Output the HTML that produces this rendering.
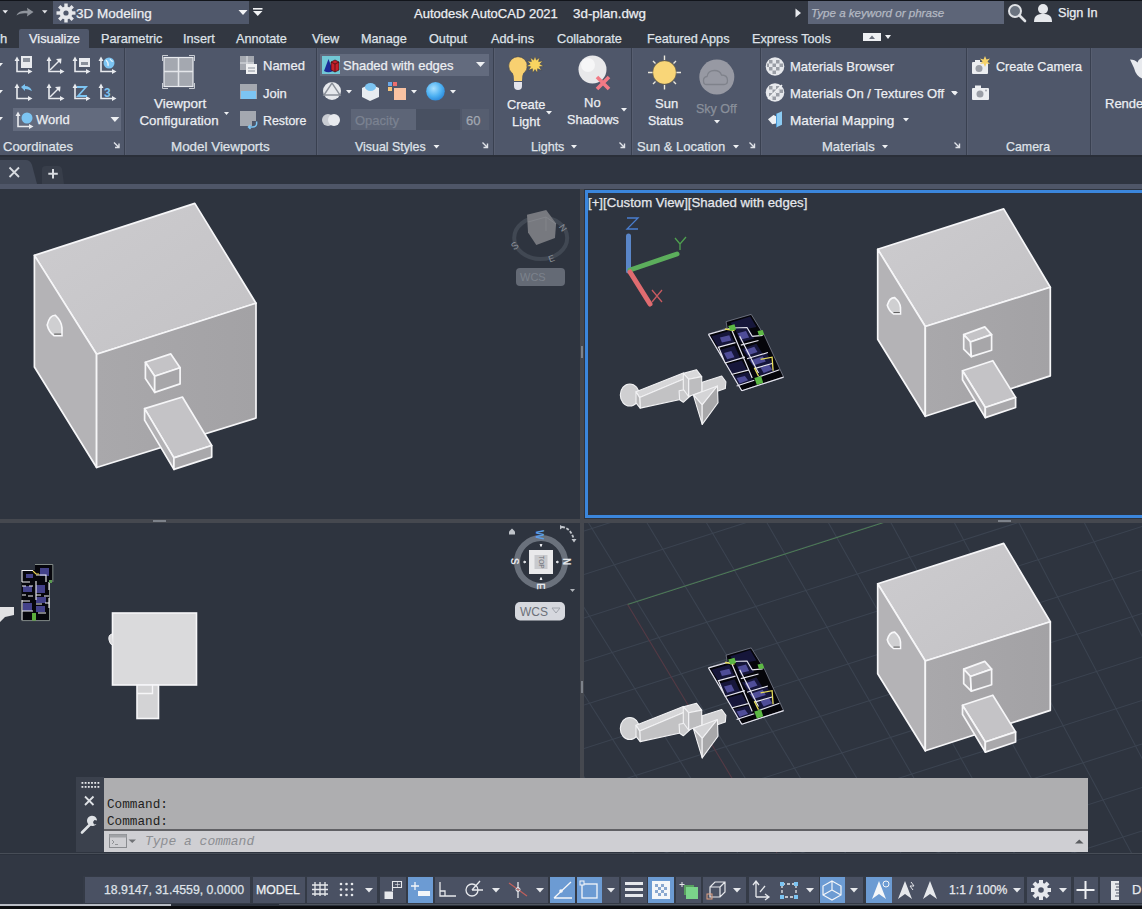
<!DOCTYPE html>
<html><head><meta charset="utf-8">
<style>
*{margin:0;padding:0;box-sizing:border-box}
html,body{width:1142px;height:909px;overflow:hidden;background:#2b313c;font-family:"Liberation Sans",sans-serif;color:#e3e6ec}
.a{position:absolute}
.t{position:absolute;white-space:nowrap;font-size:13px;line-height:16px;-webkit-text-stroke:0.25px currentColor}
svg{position:absolute;overflow:visible}
.sep{position:absolute;top:48px;width:2px;height:107px;background:linear-gradient(to right,#394050 50%,#575e70 50%)}
.lbl{position:absolute;white-space:nowrap;font-size:13px;line-height:16px;top:139px;-webkit-text-stroke:0.25px currentColor}
.sb{position:absolute;top:877px;height:26px;background:#4a5163}
.blu{position:absolute;top:877px;height:26px;background:#6c9bd3}
</style></head><body>
<!-- TITLE BAR -->
<div class="a" style="left:0;top:0;width:1142px;height:26px;background:#323741"></div>
<div class="a" style="left:0;top:0;width:1142px;height:1px;background:#12151b"></div>
<svg style="left:0;top:0" width="60" height="26">
 <path d="M2.5 10.2 L8 10.2 L5.25 13.5 Z" fill="#eceef2"/>
 <path d="M16.5 15.5 C18 11.5 22 10.5 27.5 10.8 L27 7.8 L33.5 12 L27 16.5 L27.5 13.5 C23 13 19.5 13.5 16.5 15.5 Z" fill="#8f949c"/>
 <path d="M42 10.2 L47.5 10.2 L44.75 13.5 Z" fill="#e0e2e6"/>
</svg>
<div class="a" style="left:53px;top:1px;width:196px;height:23px;background:#50586b"></div>
<svg style="left:55px;top:2px" width="22" height="22" viewBox="0 0 22 22">
 <g fill="#e6e8ec">
  <circle cx="11" cy="11" r="6.5"/>
  <rect x="9.3" y="1.5" width="3.4" height="4"/><rect x="9.3" y="16.5" width="3.4" height="4"/>
  <rect x="1.5" y="9.3" width="4" height="3.4"/><rect x="16.5" y="9.3" width="4" height="3.4"/>
  <rect x="9.3" y="1.5" width="3.4" height="4" transform="rotate(45 11 11)"/><rect x="9.3" y="16.5" width="3.4" height="4" transform="rotate(45 11 11)"/>
  <rect x="1.5" y="9.3" width="4" height="3.4" transform="rotate(45 11 11)"/><rect x="16.5" y="9.3" width="4" height="3.4" transform="rotate(45 11 11)"/>
 </g>
 <circle cx="11" cy="11" r="2.6" fill="#50586b"/>
</svg>
<div class="t" style="left:76px;top:6px;font-size:13.5px;color:#eceef2">3D Modeling</div>
<svg style="left:236px;top:8px" width="30" height="12">
 <path d="M2.5 2 L11.5 2 L7 7 Z" fill="#f2f3f5"/>
 <rect x="17" y="0" width="9.5" height="1.6" fill="#f2f3f5"/>
 <path d="M17 3 L26.5 3 L21.75 8 Z" fill="#f2f3f5"/>
</svg>
<div class="t" style="left:414px;top:6px;color:#eceef2">Autodesk AutoCAD 2021</div>
<div class="t" style="left:573px;top:6px;font-size:13.4px;color:#eceef2">3d-plan.dwg</div>
<svg style="left:794px;top:8px" width="10" height="10"><path d="M1.5 0.5 L7 5 L1.5 9.5 Z" fill="#e8eaee"/></svg>
<div class="a" style="left:808px;top:1px;width:196px;height:23px;background:#5d6578"></div>
<div class="t" style="left:811px;top:4.5px;font-size:11.6px;font-style:italic;color:#b4b9c3">Type a keyword or phrase</div>
<svg style="left:1007px;top:3px" width="20" height="20">
 <circle cx="8" cy="8" r="6" fill="#6b7380" stroke="#e0e2e6" stroke-width="2"/>
 <path d="M12.5 12.5 L18 18" stroke="#e0e2e6" stroke-width="2.6" stroke-linecap="round"/>
</svg>
<svg style="left:1033px;top:3px" width="21" height="20">
 <circle cx="10" cy="6" r="5" fill="#e6e8ec"/>
 <path d="M1 19 C1 12 5 11 10 11 C15 11 19 12 19 19 Z" fill="#e6e8ec"/>
</svg>
<div class="t" style="left:1058px;top:5px;font-size:12.7px;color:#eceef2">Sign In</div>

<!-- TABS ROW -->
<div class="a" style="left:0;top:26px;width:1142px;height:22px;background:#323741"></div>
<div class="a" style="left:19px;top:29px;width:70px;height:19px;background:#4f576a;border-radius:2px 2px 0 0"></div>
<div class="t" style="left:0;top:31px;color:#dfe2e8">h</div>
<div class="t" style="left:29px;top:31px;font-size:12.8px;color:#eceef2">Visualize</div>
<div class="t" style="left:101px;top:31px;font-size:12.7px;color:#dfe2e8">Parametric</div>
<div class="t" style="left:183px;top:31px;font-size:12.7px;color:#dfe2e8">Insert</div>
<div class="t" style="left:236px;top:31px;font-size:12.7px;color:#dfe2e8">Annotate</div>
<div class="t" style="left:312px;top:31px;font-size:12.7px;color:#dfe2e8">View</div>
<div class="t" style="left:361px;top:31px;font-size:12.7px;color:#dfe2e8">Manage</div>
<div class="t" style="left:429px;top:31px;font-size:12.7px;color:#dfe2e8">Output</div>
<div class="t" style="left:491px;top:31px;font-size:12.7px;color:#dfe2e8">Add-ins</div>
<div class="t" style="left:557px;top:31px;font-size:12.7px;color:#dfe2e8">Collaborate</div>
<div class="t" style="left:647px;top:31px;font-size:12.7px;color:#dfe2e8">Featured Apps</div>
<div class="t" style="left:752px;top:31px;font-size:12.7px;color:#dfe2e8">Express Tools</div>
<svg style="left:862px;top:32px" width="30" height="12">
 <rect x="1" y="1" width="18" height="8" fill="#eef0f3"/>
 <path d="M7 7 L10 3.5 L13 7 Z" fill="#6a707c"/>
 <path d="M23 3 L29 3 L26 7 Z" fill="#eef0f3"/>
</svg>
<!-- RIBBON -->
<div class="a" style="left:0;top:48px;width:1142px;height:107px;background:#4f576a"></div>
<div class="sep" style="left:124px"></div>
<div class="sep" style="left:316px"></div>
<div class="sep" style="left:493px"></div>
<div class="sep" style="left:631px"></div>
<div class="sep" style="left:760px"></div>
<div class="sep" style="left:966px"></div>
<div class="sep" style="left:1090px"></div>
<svg style="left:0;top:0" width="1142" height="160">
 <defs>
  <g id="ax">
   <path d="M2 3.5 V15.5 H14" fill="none" stroke="#e8eaee" stroke-width="1.6"/>
   <path d="M-0.5 5 L2 0.5 L4.5 5 Z M13 13 L17.5 15.5 L13 18 Z" fill="#e8eaee"/>
  </g>
  <path id="dd" d="M0 0 L6 0 L3 3.5 Z" fill="#eef0f3"/>
  <g id="arr"><path d="M0.5 0.5 L5.5 5.5 M5.5 1.5 V5.5 H1.5" fill="none" stroke="#dfe2e8" stroke-width="1.4"/></g>
 </defs>
 <!-- left edge dropdowns -->
 <use href="#dd" x="-3" y="63"/><use href="#dd" x="-3" y="90"/><use href="#dd" x="-3" y="117"/>
 <!-- UCS icons row 1 -->
 <use href="#ax" x="15" y="56"/>
 <rect x="21" y="56" width="11" height="12" fill="#e8eaee"/><rect x="23" y="58" width="7" height="4" fill="#8a909b"/>
 <use href="#ax" x="47" y="56"/>
 <path d="M50 70 L60 60" stroke="#e8eaee" stroke-width="1.5"/><path d="M56 59 L61.5 58.5 L61 64 Z" fill="#e8eaee"/>
 <use href="#ax" x="73" y="56"/>
 <rect x="79" y="58" width="11" height="9" fill="#e8eaee"/><rect x="81" y="62" width="7" height="3" fill="#8a909b"/>
 <use href="#ax" x="99" y="56"/>
 <circle cx="109" cy="63" r="5.5" fill="#7cc4f2"/><path d="M106 60 Q109 63 108 66 M110 59 Q112 62 113 61" stroke="#e8f4fb" stroke-width="1.2" fill="none"/>
 <!-- row 2 -->
 <use href="#ax" x="15" y="83"/>
 <path d="M21 87 L25 84 L25 86 Q30 86 32 91 Q28 89 25 89 L25 91 Z" fill="#7cc4f2"/>
 <use href="#ax" x="47" y="83"/>
 <path d="M50 97 L59 88" stroke="#e8eaee" stroke-width="1.5"/><path d="M55 87 L60.5 86.5 L60 92 Z" fill="#e8eaee"/>
 <use href="#ax" x="73" y="83"/>
 <path d="M77 87 H86 L78 96 H87" fill="none" stroke="#7cc4f2" stroke-width="1.8"/>
 <use href="#ax" x="99" y="83"/>
 <text x="104" y="97" font-family="Liberation Sans" font-weight="bold" font-size="12" fill="#7cc4f2">3</text>
 <!-- World dropdown -->
 <rect x="13" y="108" width="108" height="23" fill="#636b7e"/>
 <use href="#ax" x="16" y="111"/>
 <circle cx="27" cy="118" r="5.5" fill="#7cc4f2"/>
 <path d="M110.5 117 L119.3 117 L114.9 122 Z" fill="#eef0f3"/>
 <!-- Model viewports icon -->
 <rect x="164" y="57.5" width="29" height="29" fill="#a4a8b0" stroke="#e8eaee" stroke-width="1.2"/>
 <path d="M178.5 57 V86 M164 71.5 H193" stroke="#e4e6ea" stroke-width="1.5"/>
 <path d="M162.5 61 V55.5 H168 M189 55.5 H194.5 V61 M194.5 83 V88.5 H189 M168 88.5 H162.5 V83" fill="none" stroke="#c8ccd2" stroke-width="1"/>
 <path d="M224 112 L229 112 L226.5 115 Z" fill="#eef0f3"/>
 <!-- Named / Join / Restore icons -->
 <rect x="240" y="56" width="14" height="14" fill="#a4a8b0"/><path d="M240 63 H254 M247 56 V70" stroke="#dfe2e6" stroke-width="1"/>
 <rect x="246" y="64" width="11" height="10" fill="#f0f1f3"/><path d="M248 68 H255 M248 71 H255" stroke="#8a909b" stroke-width="1"/>
 <rect x="240" y="84" width="17" height="15" fill="#a4a8b0"/><rect x="241" y="91" width="15" height="8" fill="#7cc4f2"/>
 <rect x="240" y="111" width="16" height="15" fill="#a4a8b0"/>
 <rect x="252" y="121" width="6" height="7" fill="#4f576a"/><path d="M256.5 121.5 Q257.5 127 252.5 127 H248.5 M250.5 125 L248.5 127 L250.5 129" stroke="#7cc4f2" stroke-width="1.5" fill="none"/>
 <!-- Visual styles -->
 <rect x="320" y="54" width="169" height="22" fill="#636b7e"/>
 <rect x="322" y="56" width="18" height="18" fill="#72c8d6"/>
 <path d="M324 71 L328.5 59 L333 71 Q328.5 73.5 324 71 Z" fill="#1c2a98"/>
 <path d="M331 62 L335 60 L339 62 L339 70 L335 72 L331 70 Z" fill="#c61f2a" stroke="#301010" stroke-width="0.7"/>
 <path d="M335 64 V72 M331 62 L335 64 L339 62" stroke="#301010" stroke-width="0.7" fill="none"/>
 <path d="M476 62 L485 62 L480.5 67 Z" fill="#eef0f3"/>
 <circle cx="332" cy="91" r="9" fill="#e6e8ec"/>
 <path d="M324 95 L332 83 L340 95 Z" fill="none" stroke="#8a8f98" stroke-width="1.4"/>
 <use href="#dd" x="346" y="90"/>
 <path d="M362 88 L370 84 L379 88 L379 97 L370 101 L362 97 Z" fill="#e8ecf0"/>
 <ellipse cx="370.5" cy="87" rx="5.5" ry="4" fill="#7cc4f2"/>
 <rect x="388" y="82" width="4" height="4" fill="#6aa8e8"/><rect x="393" y="82" width="4" height="4" fill="#ee6e6e"/><rect x="388" y="87" width="4" height="4" fill="#f4c27a"/>
 <rect x="394" y="88" width="12" height="12" fill="#f9c2a2"/>
 <use href="#dd" x="411" y="90"/>
 <defs><radialGradient id="bsph" cx="0.4" cy="0.35" r="0.7"><stop offset="0" stop-color="#a8e0ff"/><stop offset="0.6" stop-color="#4cb0f2"/><stop offset="1" stop-color="#2a86d8"/></radialGradient></defs><circle cx="435.5" cy="91.3" r="9.3" fill="url(#bsph)"/>
 <use href="#dd" x="450" y="90"/>
 <circle cx="328" cy="120" r="6" fill="#c9ccd2"/><circle cx="334" cy="120" r="6" fill="#e8eaee"/>
 <rect x="351" y="109" width="109" height="21" fill="#485061"/>
 <rect x="351" y="109" width="65" height="21" fill="#5d6577"/>
 <rect x="462" y="109" width="27" height="21" fill="#565e70"/>
 <!-- Lights -->
 <circle cx="518" cy="66" r="9.3" fill="#f8d070" stroke="#3a3f4c" stroke-width="0.6"/><path d="M512 71 Q514 75 514 81 L522 81 Q522 75 524 71 Z" fill="#f8d070"/>
 <path d="M514 82 H522 V86 Q522 90 518 90 Q514 90 514 86 Z" fill="#e4e4ec"/>
 <polygon points="535.0,56.1 536.4,60.1 539.6,57.5 538.6,61.6 542.8,61.1 539.8,64.0 543.5,65.9 539.4,66.7 541.5,70.3 537.6,68.7 537.4,73.0 535.0,69.5 532.6,73.0 532.4,68.7 528.5,70.3 530.6,66.7 526.5,65.9 530.2,64.0 527.2,61.1 531.4,61.6 530.4,57.5 533.6,60.1" fill="#f9d460" stroke="#3a3f4c" stroke-width="0.5"/>
 <use href="#dd" x="546" y="111"/>
 <circle cx="592.5" cy="69.5" r="14" fill="#e8e8ea"/><circle cx="588" cy="65" r="7" fill="#f6f6f7"/>
 <path d="M597 77 L609 89 M609 77 L597 89" stroke="#f27a86" stroke-width="3.6"/>
 <use href="#dd" x="621" y="108"/>
 <!-- Sun -->
 <circle cx="664.5" cy="72.5" r="11.8" fill="#f9d678" stroke="#5a5440" stroke-width="0.6"/>
 <g stroke="#ece8dc" stroke-width="1.4">
  <path d="M664.5 55.5 V60 M664.5 85 V89.5 M648 72.5 H652.5 M676.5 72.5 H681 M653 61 L655.5 63.5 M673.5 81.5 L676 84 M676 61 L673.5 63.5 M655.5 81.5 L653 84"/>
 </g>
 <circle cx="716.8" cy="77" r="17.5" fill="#9799a3"/>
 <path d="M706 84.5 Q703.5 84.5 703.5 80.5 Q703.5 77 707 76.5 Q708 70.5 714.5 70.5 Q720 70.5 721.5 75 Q727.5 75 727.5 80.5 Q727.5 84.5 724 84.5 Z" fill="none" stroke="#7f828b" stroke-width="1.3"/>
 <use href="#dd" x="714" y="120"/>
 <!-- Materials -->
 <circle cx="775" cy="66.5" r="9.3" fill="#e6e8ec"/>
 <g fill="#9a9ea6"><rect x="769" y="60" width="3.5" height="3.5"/><rect x="776" y="60" width="3.5" height="3.5"/><rect x="772.5" y="63.5" width="3.5" height="3.5"/><rect x="779.5" y="63.5" width="3.5" height="3.5"/><rect x="769" y="67" width="3.5" height="3.5"/><rect x="776" y="67" width="3.5" height="3.5"/><rect x="772.5" y="70.5" width="3.5" height="3.5"/><rect x="767" y="63.5" width="2" height="3.5"/></g>
 <circle cx="775" cy="92.5" r="9.3" fill="#e6e8ec"/>
 <g fill="#9a9ea6"><rect x="769" y="86" width="3.5" height="3.5"/><rect x="776" y="86" width="3.5" height="3.5"/><rect x="772.5" y="89.5" width="3.5" height="3.5"/><rect x="779.5" y="89.5" width="3.5" height="3.5"/><rect x="769" y="93" width="3.5" height="3.5"/><rect x="776" y="93" width="3.5" height="3.5"/><rect x="772.5" y="96.5" width="3.5" height="3.5"/></g>
 <path d="M768 99 L782 85" stroke="#f0f1f3" stroke-width="1.6"/>
 <path d="M768 119.3 L773.5 115 L776 116.3 L776 123.6 L772.3 124.2 Z" fill="#eef0f3"/><path d="M776.5 113.8 L782 111.3 L782 124.8 L776.5 127.3 Z" fill="#8ccbf2"/><path d="M776.5 113.8 V127.3" stroke="#4a9ad8" stroke-width="1"/>
 <use href="#dd" x="951" y="91"/>
 <use href="#dd" x="903" y="118"/>
 <!-- Camera -->
 <rect x="972" y="62" width="16" height="12" rx="1" fill="#eceef1"/><rect x="975" y="60" width="5" height="3" fill="#eceef1"/>
 <circle cx="979" cy="68.5" r="3.5" fill="#9a9ea6"/>
 <path d="M985 56 L986.5 59.5 L990 58.5 L987.5 61.5 L990 64 L986.5 63.5 L985 67 L983.5 63.5 L980 64 L982.5 61.5 L980 58.5 L983.5 59.5 Z" fill="#f6d36a"/>
 <rect x="972" y="88" width="17" height="12" rx="1" fill="#eceef1"/><rect x="975" y="85.5" width="6" height="3" fill="#eceef1"/>
 <circle cx="980" cy="94" r="3.5" fill="#9a9ea6"/><circle cx="986" cy="90.5" r="0.9" fill="#9a9ea6"/>
 <use href="#dd" x="952" y="92"/>
 <!-- Render icon -->
 <path d="M1130 59.5 Q1135 59.5 1137.5 62.5 Q1139 59 1142 57.5 V78.5 Q1136 76 1134 68 Z" fill="#e8eaee"/>
 <!-- label arrows -->
 <use href="#arr" x="113.5" y="142"/>
 <use href="#arr" x="482" y="142"/>
 <use href="#arr" x="619" y="142"/>
 <use href="#arr" x="749" y="142"/>
 <use href="#arr" x="954" y="142"/>
 <use href="#dd" x="433.5" y="145"/>
 <use href="#dd" x="571" y="145"/>
 <use href="#dd" x="733" y="145"/>
 <use href="#dd" x="882" y="145"/>
</svg>
<div class="t" style="left:36px;top:112px;color:#eceef2">World</div>
<div class="t" style="left:343px;top:58px;color:#eceef2">Shaded with edges</div>
<div class="t" style="left:355px;top:113px;color:#7b8291">Opacity</div>
<div class="t" style="left:466px;top:113px;color:#a3a8b2">60</div>
<div class="t" style="left:154px;top:96px;font-size:13.5px;color:#eceef2">Viewport</div>
<div class="t" style="left:139.5px;top:113px;font-size:13.3px;color:#eceef2">Configuration</div>
<div class="t" style="left:263px;top:58px;color:#eceef2">Named</div>
<div class="t" style="left:263px;top:86px;color:#eceef2">Join</div>
<div class="t" style="left:263px;top:113px;font-size:12.4px;color:#eceef2">Restore</div>
<div class="t" style="left:507px;top:97px;font-size:12.8px;color:#eceef2">Create</div>
<div class="t" style="left:512px;top:114px;color:#eceef2">Light</div>
<div class="t" style="left:584px;top:95px;color:#eceef2">No</div>
<div class="t" style="left:567px;top:112px;font-size:12.6px;color:#eceef2">Shadows</div>
<div class="t" style="left:655px;top:96px;color:#eceef2">Sun</div>
<div class="t" style="left:648px;top:113px;font-size:12.4px;color:#eceef2">Status</div>
<div class="t" style="left:696px;top:101px;font-size:12.5px;color:#8a909b">Sky Off</div>
<div class="t" style="left:790px;top:59px;color:#eceef2">Materials Browser</div>
<div class="t" style="left:790px;top:86px;color:#eceef2">Materials On / Textures Off</div>
<div class="t" style="left:790px;top:113px;font-size:13.6px;color:#eceef2">Material Mapping</div>
<div class="t" style="left:996px;top:59px;font-size:12.6px;color:#eceef2">Create Camera</div>
<div class="t" style="left:1105px;top:96px;color:#eceef2">Render</div>
<div class="lbl" style="left:3px;color:#dfe2e8">Coordinates</div>
<div class="lbl" style="left:171px;font-size:13.4px;color:#dfe2e8">Model Viewports</div>
<div class="lbl" style="left:355px;font-size:12.4px;color:#dfe2e8">Visual Styles</div>
<div class="lbl" style="left:531px;font-size:12.5px;color:#dfe2e8">Lights</div>
<div class="lbl" style="left:637px;color:#dfe2e8">Sun &amp; Location</div>
<div class="lbl" style="left:822px;color:#dfe2e8">Materials</div>
<div class="lbl" style="left:1006px;font-size:12.4px;color:#dfe2e8">Camera</div>
<!-- FILE TABS -->
<div class="a" style="left:0;top:155px;width:1142px;height:2px;background:#2a2f39"></div>
<div class="a" style="left:0;top:157px;width:1142px;height:27px;background:#2f3541"></div>
<svg style="left:0;top:155px" width="80" height="34">
 <path d="M0 5 H26 Q30 5 32 10 L37 29 H0 Z" fill="#424958"/>
 <path d="M42 14 Q42 11 46 11 H58 Q61 11 62 14 L64 29 H42 Z" fill="#383e4a"/>
 <path d="M9.5 12.5 L19 22 M19 12.5 L9.5 22" stroke="#d8dbe0" stroke-width="1.8"/>
 <path d="M53 14 V23.5 M48.3 18.7 H57.8" stroke="#d8dbe0" stroke-width="2"/>
</svg>
<div class="a" style="left:0;top:184px;width:1142px;height:5px;background:#4f5668"></div>
<!-- VIEWPORTS -->
<div class="a" style="left:0;top:189px;width:1142px;height:664px;background:#2e343f"></div>
<svg style="left:0;top:0" width="1142" height="909">
 <defs><clipPath id="cbr"><rect x="584" y="523" width="558" height="330"/></clipPath>
  <linearGradient id="gtop" x1="0" y1="0" x2="1" y2="1"><stop offset="0" stop-color="#cdcccf"/><stop offset="1" stop-color="#c3c2c5"/></linearGradient>
  <linearGradient id="gright" x1="0" y1="0" x2="1" y2="0"><stop offset="0" stop-color="#a9a8ab"/><stop offset="1" stop-color="#a3a2a5"/></linearGradient>
 </defs>
 <g clip-path="url(#cbr)" stroke="#3b4350" stroke-width="1.1" fill="none">
  <path d="M584 444.0 L1142 265.4 M584 487.5 L1142 308.9 M584 531.0 L1142 352.4 M584 574.5 L1142 395.9 M584 618.0 L1142 439.4 M584 661.5 L1142 482.9 M584 705.0 L1142 526.4 M584 748.5 L1142 569.9 M584 792.0 L1142 613.4 M584 835.5 L1142 656.9 M584 879.0 L1142 700.4 M584 922.5 L1142 743.9 M584 966.0 L1142 787.4 M584 1009.5 L1142 830.9 M258.0 522 L3485.0 5243.0 M310.5 522 L3485.0 5243.0 M364.0 522 L3485.0 5243.0 M418.5 522 L3485.0 5243.0 M474.0 522 L3485.0 5243.0 M530.5 522 L3485.0 5243.0 M588.0 522 L3485.0 5243.0 M646.5 522 L3485.0 5243.0 M706.0 522 L3485.0 5243.0 M766.5 522 L3485.0 5243.0 M828.0 522 L3485.0 5243.0 M890.5 522 L3485.0 5243.0 M954.0 522 L3485.0 5243.0 M1018.5 522 L3485.0 5243.0 M1084.0 522 L3485.0 5243.0 M1150.5 522 L3485.0 5243.0 M1218.0 522 L3485.0 5243.0 "/>
 </g>
 <g clip-path="url(#cbr)">
  <path d="M627.6 604.5 L890 520.5" stroke="#4e7d56" stroke-width="1"/>
  <path d="M627.6 604.5 L777 853" stroke="#553a45" stroke-width="1.1"/>
 </g>
</svg>
<!-- splitters -->
<div class="a" style="left:580px;top:189px;width:4px;height:589px;background:#45484f"></div>
<div class="a" style="left:0;top:519px;width:1142px;height:4px;background:#45484f"></div>
<div class="a" style="left:153px;top:520px;width:13px;height:2px;background:#7d828a"></div>
<div class="a" style="left:998px;top:520px;width:13px;height:2px;background:#7d828a"></div>
<div class="a" style="left:581px;top:346px;width:2px;height:12px;background:#7d828a"></div>
<div class="a" style="left:581px;top:681px;width:2px;height:12px;background:#7d828a"></div>
<!-- active viewport border -->
<div class="a" style="left:585px;top:190px;width:560px;height:328px;border:3px solid #3b86dc;border-right:none"></div>
<div class="t" style="left:588px;top:195px;font-size:13.2px;color:#e6e8ec">[+][Custom View][Shaded with edges]</div>
<svg style="left:0;top:0" width="1142" height="909">
 <g stroke="#f6f6f8" stroke-width="1.7" stroke-linejoin="round">
  <polygon points="194.8,203.4 34.4,255.4 96.6,354.3 256.0,303.2" fill="url(#gtop)"/>
  <polygon points="34.4,255.4 96.6,354.3 96.6,467.5 34.4,367.0" fill="#b4b3b6"/>
  <polygon points="96.6,354.3 256.0,303.2 256.0,418.0 96.6,467.5" fill="url(#gright)"/>
  <polygon points="145.4,362.3 170.8,353.9 180.1,367.7 154.7,376.2" fill="#c4c3c6"/>
  <polygon points="145.4,362.3 154.7,376.2 154.7,392.4 145.4,378.5" fill="#b0afb2"/>
  <polygon points="154.7,376.2 180.1,367.7 180.1,383.9 154.7,392.4" fill="#a7a6a9"/>
  <polygon points="144.6,408.6 182.4,397.0 211.7,445.5 173.9,457.9" fill="#c4c3c6"/>
  <polygon points="144.6,408.6 173.9,457.9 173.9,469.4 144.6,420.1" fill="#b3b2b5"/>
  <polygon points="173.9,457.9 211.7,445.5 211.7,457.1 173.9,469.4" fill="#a9a8ab"/>
 </g>
 <path d="M47.2 325.0 Q49.5 315.1 55.4 315.3 Q61.7 321.3 62.0 327.9 V335.8 H54.2 Q48.7 331.7 47.2 325.0 Z" fill="#cfcfd1" stroke="#f8f8fa" stroke-width="1.6"/>
 <path d="M54.2 334.1 H61.2" stroke="#555" stroke-width="1"/>
 <g stroke="#f6f6f8" stroke-width="1.7" stroke-linejoin="round">
  <polygon points="1003.7,208.9 877.7,249.3 925.3,326.5 1050.3,287.3" fill="url(#gtop)"/>
  <polygon points="877.7,249.3 925.3,326.5 925.3,416.3 877.7,339.2" fill="#b4b3b6"/>
  <polygon points="925.3,326.5 1050.3,287.3 1050.3,375.9 925.3,416.3" fill="url(#gright)"/>
  <polygon points="963.7,334.6 984.8,326.9 991.6,334.6 970.5,342.0" fill="#c4c3c6"/>
  <polygon points="963.7,334.6 970.5,342.0 971.3,356.6 963.7,349.2" fill="#b0afb2"/>
  <polygon points="970.5,342.0 991.6,334.6 991.6,350.3 971.3,356.6" fill="#a7a6a9"/>
  <polygon points="962.5,370.8 992.8,360.7 1015.6,397.4 985.3,407.5" fill="#c4c3c6"/>
  <polygon points="962.5,370.8 985.3,407.5 985.3,417.6 962.5,379.7" fill="#b3b2b5"/>
  <polygon points="985.3,407.5 1015.6,397.4 1015.6,407.5 985.3,417.6" fill="#a9a8ab"/>
 </g>
 <path d="M887.3 305.3 Q889.4 297.4 894.7 297.6 Q900.2 302.3 900.5 307.6 V313.9 H893.5 Q888.7 310.6 887.3 305.3 Z" fill="#cfcfd1" stroke="#f8f8fa" stroke-width="1.6"/>
 <path d="M893.5 312.6 H899.8" stroke="#555" stroke-width="1"/>
 <g stroke="#f6f6f8" stroke-width="1.7" stroke-linejoin="round">
  <polygon points="1003.7,543.4 877.7,583.8 925.3,661.0 1050.3,621.8" fill="url(#gtop)"/>
  <polygon points="877.7,583.8 925.3,661.0 925.3,750.8 877.7,673.7" fill="#b4b3b6"/>
  <polygon points="925.3,661.0 1050.3,621.8 1050.3,710.4 925.3,750.8" fill="url(#gright)"/>
  <polygon points="963.7,669.1 984.8,661.4 991.6,669.1 970.5,676.5" fill="#c4c3c6"/>
  <polygon points="963.7,669.1 970.5,676.5 971.3,691.1 963.7,683.7" fill="#b0afb2"/>
  <polygon points="970.5,676.5 991.6,669.1 991.6,684.8 971.3,691.1" fill="#a7a6a9"/>
  <polygon points="962.5,705.3 992.8,695.2 1015.6,731.9 985.3,742.0" fill="#c4c3c6"/>
  <polygon points="962.5,705.3 985.3,742.0 985.3,752.1 962.5,714.2" fill="#b3b2b5"/>
  <polygon points="985.3,742.0 1015.6,731.9 1015.6,742.0 985.3,752.1" fill="#a9a8ab"/>
 </g>
 <path d="M887.3 639.8 Q889.4 631.9 894.7 632.1 Q900.2 636.9 900.5 642.1 V648.4 H893.5 Q888.7 645.1 887.3 639.8 Z" fill="#cfcfd1" stroke="#f8f8fa" stroke-width="1.6"/>
 <path d="M893.5 647.1 H899.8" stroke="#555" stroke-width="1"/>
 <g>
  <polygon points="708.4,334.3 727.2,328.0 726.1,321.7 751.2,314.4 764.8,336.3 783.6,377.1 741.8,390.7" fill="#05050a" stroke="#9aa0b0" stroke-width="0.6"/>
  <polygon points="711.5,336.3 729.3,331.1 734.5,342.6 717.8,346.8" fill="#16163a"/>
  <polygon points="735.5,330.1 748.1,326.9 754.3,338.4 740.8,342.6" fill="#16163a"/>
  <polygon points="719.9,349.9 734.5,345.8 740.8,359.3 726.1,362.5" fill="#16163a"/>
  <polygon points="741.8,348.9 756.4,343.7 762.7,354.1 748.1,358.3" fill="#16163a"/>
  <polygon points="748.1,359.3 766.9,353.1 772.1,363.5 754.3,367.7" fill="#16163a"/>
  <polygon points="727.2,364.6 741.8,360.4 747.0,369.8 731.3,374.0" fill="#16163a"/>
  <polygon points="733.4,376.1 748.1,371.9 753.3,381.3 738.7,385.5" fill="#16163a"/>
  <polygon points="756.4,365.6 771.1,361.4 775.2,371.9 759.6,376.1" fill="#16163a"/>
  <polygon points="730.3,322.8 750.2,316.5 756.4,326.9 736.6,331.1" fill="#16163a"/>
  <polygon points="719.9,337.4 729.3,335.3 731.3,340.5 721.9,342.6" fill="#4f4d98"/>
  <polygon points="737.6,333.2 746.0,331.1 749.1,337.4 740.8,339.5" fill="#4f4d98"/>
  <polygon points="724.0,353.1 731.3,351.0 734.5,357.2 727.2,359.3" fill="#4f4d98"/>
  <polygon points="744.9,349.9 754.3,346.8 757.5,352.0 748.1,355.2" fill="#4f4d98"/>
  <polygon points="750.2,360.4 762.7,356.2 765.8,361.4 753.3,365.6" fill="#4f4d98"/>
  <polygon points="736.6,378.1 744.9,376.1 748.1,380.2 739.7,383.4" fill="#4f4d98"/>
  <polygon points="760.6,367.7 769.0,364.6 772.1,369.8 763.7,372.9" fill="#4f4d98"/>
  <path d="M708.4 334.3 L741.8 390.7 M741.8 390.7 L783.6 377.1 M708.4 334.3 L731.3 328.0 L747.0 327.5 L752.2 336.3 M717.8 347.3 L735.5 342.6 M725.1 363.0 L744.9 357.2 M731.3 374.5 L749.1 369.8 M736.6 386.0 L754.3 380.2 M740.8 345.2 L758.5 340.5 M747.0 358.8 L767.9 352.5 M754.3 368.7 L772.1 363.5 M758.5 377.1 L779.4 369.8 M731.3 329.0 L752.2 378.1 M739.7 336.3 L758.5 372.9 M752.2 336.3 L762.7 335.3 M718.8 347.8 L725.1 363.0" stroke="#e4e4ee" stroke-width="1.2" fill="none"/>
  <path d="M760.6 359.3 L772.1 357.2 L773.1 370.8 M754.3 367.7 L758.5 376.1 M725.1 329.0 L734.5 330.6" stroke="#e6dc58" stroke-width="1.3" fill="none"/>
  <polygon points="728.2,325.9 734.5,324.3 736.1,329.6 730.3,331.1" fill="#5cb844"/>
  <polygon points="757.5,331.1 762.7,330.1 764.3,334.8 759.0,335.8" fill="#5cb844"/>
  <polygon points="754.3,378.1 761.1,376.1 763.2,382.8 756.9,384.9" fill="#5cb844"/>
 </g>
 <g>
  <polygon points="708.4,667.8 727.2,661.5 726.1,655.2 751.2,647.9 764.8,669.8 783.6,710.6 741.8,724.2" fill="#05050a" stroke="#9aa0b0" stroke-width="0.6"/>
  <polygon points="711.5,669.8 729.3,664.6 734.5,676.1 717.8,680.3" fill="#16163a"/>
  <polygon points="735.5,663.6 748.1,660.4 754.3,671.9 740.8,676.1" fill="#16163a"/>
  <polygon points="719.9,683.4 734.5,679.3 740.8,692.8 726.1,696.0" fill="#16163a"/>
  <polygon points="741.8,682.4 756.4,677.2 762.7,687.6 748.1,691.8" fill="#16163a"/>
  <polygon points="748.1,692.8 766.9,686.6 772.1,697.0 754.3,701.2" fill="#16163a"/>
  <polygon points="727.2,698.1 741.8,693.9 747.0,703.3 731.3,707.5" fill="#16163a"/>
  <polygon points="733.4,709.6 748.1,705.4 753.3,714.8 738.7,719.0" fill="#16163a"/>
  <polygon points="756.4,699.1 771.1,694.9 775.2,705.4 759.6,709.6" fill="#16163a"/>
  <polygon points="730.3,656.3 750.2,650.0 756.4,660.4 736.6,664.6" fill="#16163a"/>
  <polygon points="719.9,670.9 729.3,668.8 731.3,674.0 721.9,676.1" fill="#4f4d98"/>
  <polygon points="737.6,666.7 746.0,664.6 749.1,670.9 740.8,673.0" fill="#4f4d98"/>
  <polygon points="724.0,686.6 731.3,684.5 734.5,690.7 727.2,692.8" fill="#4f4d98"/>
  <polygon points="744.9,683.4 754.3,680.3 757.5,685.5 748.1,688.7" fill="#4f4d98"/>
  <polygon points="750.2,693.9 762.7,689.7 765.8,694.9 753.3,699.1" fill="#4f4d98"/>
  <polygon points="736.6,711.6 744.9,709.6 748.1,713.7 739.7,716.9" fill="#4f4d98"/>
  <polygon points="760.6,701.2 769.0,698.1 772.1,703.3 763.7,706.4" fill="#4f4d98"/>
  <path d="M708.4 667.8 L741.8 724.2 M741.8 724.2 L783.6 710.6 M708.4 667.8 L731.3 661.5 L747.0 661.0 L752.2 669.8 M717.8 680.8 L735.5 676.1 M725.1 696.5 L744.9 690.7 M731.3 708.0 L749.1 703.3 M736.6 719.5 L754.3 713.7 M740.8 678.7 L758.5 674.0 M747.0 692.3 L767.9 686.0 M754.3 702.2 L772.1 697.0 M758.5 710.6 L779.4 703.3 M731.3 662.5 L752.2 711.6 M739.7 669.8 L758.5 706.4 M752.2 669.8 L762.7 668.8 M718.8 681.3 L725.1 696.5" stroke="#e4e4ee" stroke-width="1.2" fill="none"/>
  <path d="M760.6 692.8 L772.1 690.7 L773.1 704.3 M754.3 701.2 L758.5 709.6 M725.1 662.5 L734.5 664.1" stroke="#e6dc58" stroke-width="1.3" fill="none"/>
  <polygon points="728.2,659.4 734.5,657.8 736.1,663.1 730.3,664.6" fill="#5cb844"/>
  <polygon points="757.5,664.6 762.7,663.6 764.3,668.3 759.0,669.3" fill="#5cb844"/>
  <polygon points="754.3,711.6 761.1,709.6 763.2,716.3 756.9,718.4" fill="#5cb844"/>
 </g>
 <g stroke="#f2f2f4" stroke-width="1.1" stroke-linejoin="round">
  <ellipse cx="629.8" cy="395" rx="9.5" ry="11" fill="#cfcfd1"/>
  <polygon points="636.0,391.8 683.3,372.9 684.3,378.7 639.7,397.6" fill="#d6d6d8"/>
  <polygon points="639.7,397.6 684.3,378.7 683.3,392.8 679.1,399.7 640.2,408.1" fill="#c2c2c4"/>
  <polygon points="636.0,391.8 639.7,397.6 640.2,408.1 636.0,402.8" fill="#b8b8ba"/>
  <polygon points="702.2,382.3 721.7,376.0 725.9,381.8 725.3,388.6 717.4,391.3 702.2,396.5" fill="#d0d0d2"/>
  <polygon points="679.1,390.7 684.3,389.7 690.7,395.5 683.3,402.3 679.6,399.7" fill="#cacacc"/>
  <polygon points="683.3,373.4 696.4,369.7 701.7,376.6 688.6,379.2" fill="#d8d8da"/>
  <polygon points="688.6,379.2 701.7,376.6 701.7,391.8 688.6,396.5" fill="#bdbdbf"/>
  <polygon points="683.3,373.4 688.6,379.2 688.6,396.5 683.3,389.2" fill="#c8c8ca"/>
  <polygon points="693.3,394.9 717.4,386.0 702.2,404.9" fill="#d4d4d6"/>
  <polygon points="693.3,394.9 702.2,404.9 702.2,424.4" fill="#b4b4b6"/>
  <polygon points="702.2,404.9 717.4,386.0 718.0,402.8 702.2,424.4" fill="#a8a8aa"/>
 </g>
 <g stroke="#f2f2f4" stroke-width="1.1" stroke-linejoin="round">
  <ellipse cx="629.8" cy="728.5" rx="9.5" ry="11" fill="#cfcfd1"/>
  <polygon points="636.0,725.3 683.3,706.4 684.3,712.2 639.7,731.1" fill="#d6d6d8"/>
  <polygon points="639.7,731.1 684.3,712.2 683.3,726.3 679.1,733.2 640.2,741.6" fill="#c2c2c4"/>
  <polygon points="636.0,725.3 639.7,731.1 640.2,741.6 636.0,736.3" fill="#b8b8ba"/>
  <polygon points="702.2,715.8 721.7,709.5 725.9,715.3 725.3,722.1 717.4,724.8 702.2,730.0" fill="#d0d0d2"/>
  <polygon points="679.1,724.2 684.3,723.2 690.7,729.0 683.3,735.8 679.6,733.2" fill="#cacacc"/>
  <polygon points="683.3,706.9 696.4,703.2 701.7,710.1 688.6,712.7" fill="#d8d8da"/>
  <polygon points="688.6,712.7 701.7,710.1 701.7,725.3 688.6,730.0" fill="#bdbdbf"/>
  <polygon points="683.3,706.9 688.6,712.7 688.6,730.0 683.3,722.7" fill="#c8c8ca"/>
  <polygon points="693.3,728.4 717.4,719.5 702.2,738.4" fill="#d4d4d6"/>
  <polygon points="693.3,728.4 702.2,738.4 702.2,757.9" fill="#b4b4b6"/>
  <polygon points="702.2,738.4 717.4,719.5 718.0,736.3 702.2,757.9" fill="#a8a8aa"/>
 </g>
 <!-- faded viewcube TL -->
 <ellipse cx="540.7" cy="238" rx="26.5" ry="21" fill="none" stroke="#414853" stroke-width="4"/>
 <polygon points="527,214.8 546.2,209.9 556.1,223.6 555,237.9 536.3,245 528,232.4" fill="#77797f"/>
 <path d="M528 222 L546 217 L556 224 M546 217 V231" stroke="#85888e" stroke-width="0.8" fill="none"/>
 <text x="511" y="249" font-family="Liberation Sans" font-size="10" fill="#8a8f98" transform="rotate(-35 515 245)">S</text>
 <text x="560" y="232" font-family="Liberation Sans" font-size="9" fill="#8a8f98" transform="rotate(55 564 228)">N</text>
 <text x="548" y="261" font-family="Liberation Sans" font-size="9" fill="#8a8f98" transform="rotate(-20 553 257)">E</text>
 <rect x="516" y="268" width="49" height="18" rx="4" fill="#646a75"/>
 <text x="520" y="281" font-family="Liberation Sans" font-size="11" fill="#7c828c">WCS</text>
 <!-- UCS icon -->
 <path d="M628.5 271 V236" stroke="#5a86c8" stroke-width="5" stroke-linecap="round"/>
 <path d="M630 270 L677 254" stroke="#5cae5c" stroke-width="5" stroke-linecap="round"/>
 <path d="M630 272 L650 304" stroke="#e06c70" stroke-width="5" stroke-linecap="round"/>
 <path d="M627 218 H638 L627 229 H638" stroke="#4a7ed0" stroke-width="1.3" fill="none"/>
 <path d="M675 238 L680 244 L686 237 M680 244 V250" stroke="#4fa04f" stroke-width="1.3" fill="none"/>
 <path d="M652 290 L662 302 M662 290 L652 302" stroke="#c85a60" stroke-width="1.3" fill="none"/>
 <!-- ===== BOTTOM-LEFT ===== -->
 <rect x="112.5" y="613" width="84" height="72" fill="#dadadc" stroke="#f6f6f8" stroke-width="1.6"/>
 <rect x="137" y="685" width="21.5" height="33.5" fill="#d3d3d5" stroke="#f6f6f8" stroke-width="1.6"/>
 <path d="M137 693.5 H152.5 V685" stroke="#f6f6f8" stroke-width="1.4" fill="none"/>
 <path d="M112 634 Q108 635 109 640 Q110 645 113 645" fill="#dcdcde" stroke="#f6f6f8" stroke-width="1"/>
 <g>
  <polygon points="21.5,570 35,570 35,564.5 52.8,564.5 52.8,582 49.5,582 49.5,620.6 21.5,620.6" fill="#06060c"/>
  <path d="M35 564.5 H52.8 V582 M49.5 582 V620.6 H21.5" stroke="#9aa4a0" stroke-width="0.8" fill="none"/>
  <g fill="#44428a"><rect x="26" y="574" width="7" height="4"/><rect x="36" y="585" width="9" height="8"/><rect x="23" y="586" width="9" height="6"/><rect x="36" y="597" width="10" height="6"/><rect x="23" y="603" width="9" height="8"/><rect x="36" y="606" width="9" height="6"/><rect x="40" y="568" width="9" height="8"/></g>
  <path d="M22 570.5 H33 M22 570 V582 M22 582 H30 M36 575 H46 V582 M36 581 V600 M22 586 H26 M29 586 H33 M22 595 H26 M28 596 H33 M36 595 H41 M44 596 H49 M22 601 H30 M36 604 H42 M45 603 H49 M22 611 H33 M38 613 H46 M22 620 V600 M49 582 V590 M49 598 V608" stroke="#f0f0f4" stroke-width="1.1" fill="none"/>
  <path d="M33 571 L36 574 H39" stroke="#e8d050" stroke-width="1.2" fill="none"/>
  <rect x="32" y="613" width="4" height="7.5" fill="#5cae3c"/><rect x="49" y="580" width="3" height="3" fill="#5a9a50"/>
 </g>
 <polygon points="0,607 14,607 14,615 5,617 0,622" fill="#e2e2e4"/>
 <!-- viewcube BL -->
 <circle cx="541" cy="562" r="24" fill="none" stroke="#6a717c" stroke-width="6"/>
 <rect x="529" y="550" width="24" height="24" fill="#e9e9eb"/>
 <rect x="534.5" y="555" width="13" height="14" fill="#c8c9cd"/>
 <text x="541" y="564.2" text-anchor="middle" font-family="Liberation Sans" font-size="6.5" fill="#6a6e75" transform="rotate(90 541 562)">TOP</text>
 <text x="536" y="540" font-family="Liberation Sans" font-weight="bold" font-size="10" fill="#5c9ee6" transform="rotate(90 541 535)">W</text>
 <text x="511" y="566" font-family="Liberation Sans" font-weight="bold" font-size="10" fill="#e6e8ec" transform="rotate(90 515 562)">S</text>
 <text x="563" y="566" font-family="Liberation Sans" font-weight="bold" font-size="10" fill="#e6e8ec" transform="rotate(90 567 562)">N</text>
 <text x="537" y="591" font-family="Liberation Sans" font-weight="bold" font-size="10" fill="#e6e8ec" transform="rotate(90 541 587)">E</text>
 <path d="M540 544.5 L541 546.5 L542 544.5 Z M540 579.5 L541 577.5 L542 579.5 Z M524 561 L526 562 L524 563 Z M558 561 L556 562 L558 563 Z" fill="#e6e8ec" stroke="#e6e8ec" stroke-width="1"/>
 <path d="M509 531.5 L512 528.5 L515 531.5 V534.5 H509 Z" fill="#c0c4ca"/>
 <path d="M562 527 Q571 528 574 540" fill="none" stroke="#c0c4ca" stroke-width="1.8" stroke-dasharray="3 1.5"/><path d="M560 525 L563.5 527 L560 529.5 Z M571.5 539 L574 542.5 L576.5 539 Z" fill="#c0c4ca"/>
 <path d="M570 589 L575 589 L572.5 592 Z" fill="#b0b4ba"/>
 <rect x="515" y="602" width="50" height="18.5" rx="5" fill="#d6d8de"/>
 <text x="520" y="616" font-family="Liberation Sans" font-size="12" fill="#6c7079">WCS</text>
 <path d="M552 608 L560 608 L556 613 Z" fill="none" stroke="#a0a4ac" stroke-width="1"/>
</svg>
<!-- COMMAND LINE -->
<div class="a" style="left:76px;top:777px;width:28px;height:75px;background:#3b414d"></div>
<svg style="left:76px;top:777px" width="30" height="75">
 <g fill="#e6e8ec"><rect x="5.5" y="5" width="1.8" height="1.8"/><rect x="8.7" y="5" width="1.8" height="1.8"/><rect x="11.9" y="5" width="1.8" height="1.8"/><rect x="15.1" y="5" width="1.8" height="1.8"/><rect x="18.3" y="5" width="1.8" height="1.8"/><rect x="21.5" y="5" width="1.8" height="1.8"/><rect x="5.5" y="9" width="1.8" height="1.8"/><rect x="8.7" y="9" width="1.8" height="1.8"/><rect x="11.9" y="9" width="1.8" height="1.8"/><rect x="15.1" y="9" width="1.8" height="1.8"/><rect x="18.3" y="9" width="1.8" height="1.8"/><rect x="21.5" y="9" width="1.8" height="1.8"/></g>
 <path d="M9 19.5 L17.5 28 M17.5 19.5 L9 28" stroke="#dfe2e6" stroke-width="1.8"/>
 <path d="M6 55.5 L15 46.5" stroke="#dfe2e6" stroke-width="2.6" stroke-linecap="round"/>
 <path d="M13.5 48 A5 5 0 1 1 21 43.5 L18.5 43 L17 45 L18 47.5 L20.5 47 A5 5 0 0 1 13.5 48 Z" fill="#dfe2e6"/>
</svg>
<div class="a" style="left:104px;top:778px;width:984px;height:51px;background:#aeaeb0"></div>
<div class="a" style="left:104px;top:829px;width:984px;height:2px;background:#606064"></div>
<div class="a" style="left:104px;top:831px;width:984px;height:21px;background:#cfcfd3"></div>
<div class="t" style="left:107px;top:796px;font-family:'Liberation Mono',monospace;font-size:12.7px;line-height:17px;color:#1e1e20;-webkit-text-stroke:0">Command:<br>Command:</div>
<svg style="left:104px;top:831px" width="984" height="21">
 <rect x="5.5" y="3.5" width="17" height="13" fill="none" stroke="#8a8c90" stroke-width="1"/>
 <rect x="5.5" y="3.5" width="17" height="3" fill="#a0a2a6"/>
 <path d="M8 9 L10 11 L8 13 M11 13.5 H14" stroke="#8a8c90" stroke-width="0.9" fill="none"/>
 <path d="M24.5 8.5 L32 8.5 L28.25 12 Z" fill="#707276"/>
 <path d="M971 12.5 L979.5 12.5 L975.25 8.5 Z" fill="#5a5c60"/>
</svg>
<div class="t" style="left:145px;top:833px;font-family:'Liberation Mono',monospace;font-style:italic;font-size:13px;line-height:17px;color:#8c8e92;-webkit-text-stroke:0">Type a command</div>

<!-- STATUS BAR -->
<div class="a" style="left:0;top:853px;width:1142px;height:1px;background:#474d57"></div>
<div class="a" style="left:0;top:855px;width:1142px;height:49px;background:#313743"></div>
<div class="a" style="left:83px;top:876px;width:1059px;height:28px;background:#343a46"></div>
<div class="a" style="left:0;top:904px;width:171px;height:2px;background:#b8bcc4"></div>
<div class="a" style="left:279px;top:904px;width:863px;height:1px;background:#50565f"></div>
<div class="a" style="left:0;top:906px;width:1142px;height:3px;background:#0c0d10"></div>
<div class="sb" style="left:85px;width:165px"></div>
<div class="sb" style="left:253px;width:52px"></div>
<div class="sb" style="left:307px;width:70px"></div>
<div class="sb" style="left:380px;width:26px"></div>
<div class="blu" style="left:408px;width:25px"></div>
<div class="sb" style="left:435px;width:113px"></div>
<div class="blu" style="left:550px;width:25px"></div>
<div class="blu" style="left:577px;width:25px"></div>
<div class="sb" style="left:602px;width:17px"></div>
<div class="sb" style="left:621px;width:26px"></div>
<div class="blu" style="left:648px;width:26px"></div>
<div class="sb" style="left:676px;width:25px"></div>
<div class="sb" style="left:703px;width:43px"></div>
<div class="sb" style="left:749px;width:70px"></div>
<div class="blu" style="left:820px;width:25px"></div>
<div class="sb" style="left:845px;width:18px"></div>
<div class="blu" style="left:866px;width:26px"></div>
<div class="sb" style="left:892px;width:132px"></div>
<div class="sb" style="left:1027px;width:44px"></div>
<div class="sb" style="left:1074px;width:24px"></div>
<div class="sb" style="left:1100px;width:42px"></div>
<div class="t" style="left:104px;top:882px;font-size:12.3px;color:#dfe2e8">18.9147, 31.4559, 0.0000</div>
<div class="t" style="left:256px;top:882px;font-size:12.3px;color:#eef0f3">MODEL</div>
<div class="t" style="left:949px;top:882px;font-size:12.2px;color:#e6e8ec">1:1 / 100%</div>
<div class="t" style="left:1132px;top:882px;font-size:13px;color:#e6e8ec">D</div>
<svg style="left:0;top:870px" width="1142" height="39">
 <defs><path id="sdd" d="M0 0 L8 0 L4 4.5 Z" fill="#e6e8ec"/></defs>
 <g stroke="#e6e8ec" stroke-width="1.3" fill="none">
  <!-- grid # -->
  <path d="M315 12 V26 M320 12 V26 M325 12 V26 M312 15 H328 M312 19.5 H328 M312 24 H328"/>
  <!-- ortho -->
  <path d="M440 12 V26 H456 M440 21 H445 V26"/>
  <!-- polar -->
  <circle cx="472" cy="20" r="6"/><path d="M472 20 H483 M472 20 L480 11"/>
  <!-- isodraft -->
  <path d="M518 12 V28"/>
  <!-- lineweight -->
 </g>
 <use href="#sdd" x="365" y="18"/><use href="#sdd" x="492" y="18"/><use href="#sdd" x="536" y="18"/><use href="#sdd" x="607" y="18"/><use href="#sdd" x="733" y="18"/><use href="#sdd" x="806" y="18"/><use href="#sdd" x="850" y="18"/><use href="#sdd" x="1013" y="18"/><use href="#sdd" x="1059" y="18"/>
 <g fill="#e6e8ec">
  <!-- dots grid -->
  <circle cx="341" cy="14" r="1.3"/><circle cx="346.5" cy="14" r="1.3"/><circle cx="352" cy="14" r="1.3"/>
  <circle cx="341" cy="19.5" r="1.3"/><circle cx="346.5" cy="19.5" r="1.3"/><circle cx="352" cy="19.5" r="1.3"/>
  <circle cx="341" cy="25" r="1.3"/><circle cx="346.5" cy="25" r="1.3"/><circle cx="352" cy="25" r="1.3"/>
  <!-- snap -->
  <rect x="384.5" y="21.5" width="8.5" height="7.5"/>
 </g>
 <path d="M392.5 21 V11.5 H401.5 V17.5 H393" stroke="#e6e8ec" stroke-width="1.1" fill="none"/><path d="M395 14.5 H400 M397.5 12 V17" stroke="#e6e8ec" stroke-width="0.6"/>
 <!-- infer -->
 <path d="M415 12 V20 M411 16 H419" stroke="#f4f6f9" stroke-width="1.3"/><rect x="418" y="21" width="12" height="5" fill="#f4f6f9"/>
 <path d="M509 13 L527 26" stroke="#c0605c" stroke-width="1.2"/><circle cx="518" cy="19.5" r="2" fill="none" stroke="#e6e8ec" stroke-width="1"/>
 <!-- otrack -->
 <path d="M554 28 L571 12 M554 28 H572" stroke="#f4f6f9" stroke-width="1.3" fill="none"/><circle cx="561" cy="21" r="1.8" fill="#f4f6f9"/>
 <!-- osnap -->
 <rect x="582" y="14" width="15" height="14" fill="none" stroke="#f4f6f9" stroke-width="1.3"/><rect x="580" y="11" width="4" height="4" fill="#6f9ed6" stroke="#f4f6f9" stroke-width="1"/>
 <!-- lineweight -->
 <rect x="625" y="12" width="18" height="3" fill="#e6e8ec"/><rect x="625" y="18" width="18" height="3" fill="#e6e8ec"/><rect x="625" y="24" width="18" height="3" fill="#e6e8ec"/>
 <!-- transparency -->
 <rect x="652" y="11" width="18" height="18" fill="#f4f6f9"/>
 <g fill="#8aa8d0"><rect x="655" y="14" width="3" height="3"/><rect x="661" y="14" width="3" height="3"/><rect x="658" y="17" width="3" height="3"/><rect x="664" y="17" width="3" height="3"/><rect x="655" y="20" width="3" height="3"/><rect x="661" y="20" width="3" height="3"/><rect x="658" y="23" width="3" height="3"/><rect x="664" y="23" width="3" height="3"/></g>
 <!-- sel cycling -->
 <path d="M682 12 V17 M679.5 14.5 H684.5" stroke="#e6e8ec" stroke-width="1"/><rect x="684" y="15" width="10" height="10" fill="#58a060"/><rect x="686" y="17" width="12" height="12" fill="#7ad48a"/>
 <!-- 3dosnap -->
 <path d="M710 17 L715 12 H725 V22 L720 27 H710 Z M710 17 H720 V27 M720 17 L725 12" stroke="#e6e8ec" stroke-width="1.2" fill="none"/><rect x="707" y="24" width="5" height="5" fill="none" stroke="#e0a080" stroke-width="1"/>
 <!-- ucs -->
 <path d="M756 27 V12 M753 15 L756 11 L759 15 M756 27 H768 M765 24 L769 27 L765 30" stroke="#e6e8ec" stroke-width="1.3" fill="none"/><path d="M760 22 L765 16" stroke="#e6e8ec" stroke-width="1.3"/>
 <rect x="782" y="14" width="14" height="13" fill="none" stroke="#e6e8ec" stroke-width="1.3" stroke-dasharray="3 2"/>
 <g fill="#7cc4f2"><rect x="780" y="12" width="4" height="4"/><rect x="794" y="12" width="4" height="4"/><rect x="780" y="25" width="4" height="4"/><rect x="794" y="25" width="4" height="4"/></g>
 <!-- gizmo -->
 <path d="M832 11 L841 16 V25 L832 30 L823 25 V16 Z M832 11 V20 L823 25 M832 20 L841 25" stroke="#f4f6f9" stroke-width="1.2" fill="none"/>
 <!-- annotation -->
 <path d="M872 29 L879 11 L886 29 L879 24 Z" fill="#f4f6f9"/><circle cx="886" cy="14" r="3" fill="none" stroke="#f4f6f9" stroke-width="1"/>
 <path d="M898 29 L905 11 L912 29 L905 24 Z" fill="#e6e8ec"/><path d="M911 12 L914 16 L910 16 L913 20" stroke="#e6e8ec" stroke-width="1" fill="none"/>
 <path d="M923 29 L930 11 L937 29 L930 24 Z" fill="#e6e8ec"/>
 <!-- gear -->
 <g transform="translate(1041 20)" fill="#e6e8ec"><rect x="-2" y="-10" width="4" height="4" transform="rotate(0)"/><rect x="-2" y="-10" width="4" height="4" transform="rotate(45)"/><rect x="-2" y="-10" width="4" height="4" transform="rotate(90)"/><rect x="-2" y="-10" width="4" height="4" transform="rotate(135)"/><rect x="-2" y="-10" width="4" height="4" transform="rotate(180)"/><rect x="-2" y="-10" width="4" height="4" transform="rotate(225)"/><rect x="-2" y="-10" width="4" height="4" transform="rotate(270)"/><rect x="-2" y="-10" width="4" height="4" transform="rotate(315)"/><circle r="7.2"/><circle r="2.8" fill="#4a5163"/></g>
 <!-- plus -->
 <path d="M1085.5 11 V29 M1076.5 20 H1094.5" stroke="#eef0f3" stroke-width="2"/>
 <!-- ruler -->
 <rect x="1111" y="11" width="8" height="19" fill="#e6e8ec"/><path d="M1115 14 H1119 M1116 17 H1119 M1115 20 H1119 M1116 23 H1119 M1115 26 H1119" stroke="#4a5163" stroke-width="1"/>
</svg>
</body></html>
